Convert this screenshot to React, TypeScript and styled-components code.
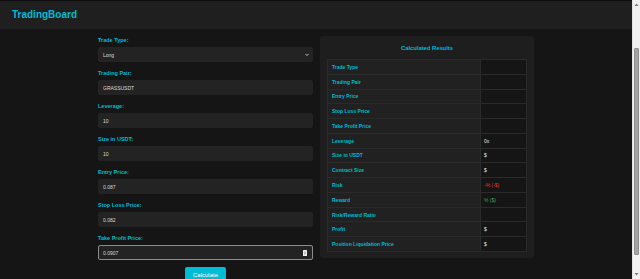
import React from "react";
import styled, { createGlobalStyle } from "styled-components";

const GlobalStyle = createGlobalStyle`
  html, body {
    margin: 0;
    padding: 0;
    height: 279px;
    overflow: hidden;
    background: #151515;
    font-family: "Liberation Sans", Arial, sans-serif;
  }
  * { box-sizing: border-box; }
`;

const Page = styled.div`
  display: flex;
  height: 279px;
`;

const Viewport = styled.div`
  flex: 1;
  min-width: 0;
  height: 279px;
  overflow: hidden;
  background: #151515;
`;

const ScrollStrip = styled.div`
  width: 8px;
  height: 279px;
  background: #f1f1f1;
  border-left: 1px solid #e2e2e2;
  display: flex;
  flex-direction: column;
  align-items: center;
`;

const ArrowBox = styled.svg`
  width: 7px;
  height: 9px;
  flex: none;
`;

const Track = styled.div`
  flex: 1;
  width: 100%;
  display: flex;
  flex-direction: column;
  align-items: center;
  padding-top: 39px;
`;

const Thumb = styled.div`
  width: 5px;
  height: 207px;
  background: #a3a3a3;
  border: 1px solid #8f8f8f;
  border-radius: 1px;
`;

const Header = styled.header`
  height: 29px;
  border-top: 1px solid #0c0c0c;
  background: #1f1f1f;
  display: flex;
  align-items: center;
  padding: 0 0 1px 12px;
`;

const Title = styled.h1`
  margin: 0;
  font-size: 10px;
  font-weight: 700;
  color: #00bcd4;
  line-height: 12px;
`;

const Main = styled.main`
  display: flex;
  justify-content: center;
  align-items: flex-start;
  gap: 7px;
  padding: 7px 0 0;
`;

const FormCol = styled.form`
  width: 215px;
  display: flex;
  flex-direction: column;
`;

const Field = styled.div`
  display: flex;
  flex-direction: column;
  margin-bottom: 7px;
`;

const Label = styled.label`
  display: block;
  font-size: 5.5px;
  line-height: 8px;
  font-weight: 700;
  color: #00bcd4;
  margin-bottom: 3px;
`;

const InputWrap = styled.div`
  position: relative;
`;

const TextInput = styled.input<{ $focused?: boolean }>`
  display: block;
  width: 100%;
  height: 15px;
  margin: 0;
  padding: 0 4px;
  border: 1px solid ${(p) => (p.$focused ? "#8c8c8c" : "#232323")};
  border-radius: 2px;
  background: #232323;
  color: #dcdcdc;
  font-family: "Liberation Sans", Arial, sans-serif;
  font-size: 5px;
  outline: none;
`;

const Select = styled.select`
  display: block;
  width: 100%;
  height: 15px;
  margin: 0;
  padding: 0 4px;
  border: 1px solid #232323;
  border-radius: 2px;
  background: #232323;
  color: #dcdcdc;
  font-family: "Liberation Sans", Arial, sans-serif;
  font-size: 5px;
  appearance: none;
  -webkit-appearance: none;
  outline: none;
`;

const Chevron = styled.svg`
  position: absolute;
  right: 4px;
  top: 5.5px;
  width: 4px;
  height: 4px;
  pointer-events: none;
`;

const Spinner = styled.svg`
  position: absolute;
  right: 6px;
  top: 4.5px;
  width: 4px;
  height: 6px;
  pointer-events: none;
`;

const ButtonRow = styled.div`
  display: flex;
  justify-content: center;
`;

const Button = styled.button`
  height: 16px;
  padding: 0 7.5px;
  border: none;
  border-radius: 2px;
  background: #00bcd4;
  color: #ffffff;
  font-family: "Liberation Sans", Arial, sans-serif;
  font-size: 6px;
  cursor: pointer;
`;

const Panel = styled.section`
  width: 214px;
  background: #1e1e1e;
  border-radius: 3px;
  padding: 8px 7px 6px;
`;

const PanelTitle = styled.h2`
  margin: 0 0 7px;
  text-align: center;
  font-size: 5.8px;
  line-height: 8px;
  font-weight: 700;
  color: #00bcd4;
`;

const Table = styled.div`
  display: grid;
  grid-template-columns: 152px 1fr;
  border: 1px solid #2a2a2a;
  border-bottom: none;
`;

const Cell = styled.div<{ $value?: boolean; $tone?: "red" | "green" }>`
  height: 14.77px;
  display: flex;
  align-items: center;
  padding-left: ${(p) => (p.$value ? "3px" : "4px")};
  border-bottom: 1px solid #2a2a2a;
  border-left: ${(p) => (p.$value ? "1px solid #2a2a2a" : "none")};
  background: ${(p) => (p.$value ? "#151515" : "#212121")};
  font-size: 5px;
  font-weight: ${(p) => (p.$value ? 400 : 700)};
  color: ${(p) =>
    p.$tone === "red"
      ? "#e53935"
      : p.$tone === "green"
      ? "#43a047"
      : p.$value
      ? "#e6e6e6"
      : "#00bcd4"};
  white-space: nowrap;
`;

const fields: { label: string; value: string; focused?: boolean }[] = [
  { label: "Trading Pair:", value: "GRASSUSDT" },
  { label: "Leverage:", value: "10" },
  { label: "Size in USDT:", value: "10" },
  { label: "Entry Price:", value: "0.087" },
  { label: "Stop Loss Price:", value: "0.082" },
  { label: "Take Profit Price:", value: "0.0907", focused: true },
];

const results: { label: string; value: string; tone?: "red" | "green" }[] = [
  { label: "Trade Type", value: "" },
  { label: "Trading Pair", value: "" },
  { label: "Entry Price", value: "" },
  { label: "Stop Loss Price", value: "" },
  { label: "Take Profit Price", value: "" },
  { label: "Leverage", value: "0x" },
  { label: "Size in USDT", value: "$" },
  { label: "Contract Size", value: "$" },
  { label: "Risk", value: "-% (-$)", tone: "red" },
  { label: "Reward", value: "% ($)", tone: "green" },
  { label: "Risk/Reward Ratio", value: "" },
  { label: "Profit", value: "$" },
  { label: "Position Liquidation Price", value: "$" },
];

export default function App() {
  return (
    <>
      <GlobalStyle />
      <Page>
        <Viewport>
          <Header>
            <Title>TradingBoard</Title>
          </Header>
          <Main>
            <FormCol onSubmit={(e) => e.preventDefault()}>
              <Field>
                <Label>Trade Type:</Label>
                <InputWrap>
                  <Select defaultValue="Long">
                    <option>Long</option>
                    <option>Short</option>
                  </Select>
                  <Chevron viewBox="0 0 8 8">
                    <path d="M1.5 2.5 L4 5 L6.5 2.5" fill="none" stroke="#e8e8e8" strokeWidth="1.6" strokeLinecap="round" strokeLinejoin="round" />
                  </Chevron>
                </InputWrap>
              </Field>
              {fields.map((f) => (
                <Field key={f.label}>
                  <Label>{f.label}</Label>
                  <InputWrap>
                    <TextInput $focused={f.focused} defaultValue={f.value} />
                    {f.focused && (
                      <Spinner viewBox="0 0 8 12">
                        <rect x="0" y="0" width="8" height="12" rx="1" fill="#f2f2f2" />
                        <path d="M2 5 L4 2.5 L6 5 Z" fill="#777" />
                        <path d="M2 7 L4 9.5 L6 7 Z" fill="#777" />
                      </Spinner>
                    )}
                  </InputWrap>
                </Field>
              ))}
              <ButtonRow>
                <Button type="submit">Calculate</Button>
              </ButtonRow>
            </FormCol>
            <Panel>
              <PanelTitle>Calculated Results</PanelTitle>
              <Table>
                {results.map((r) => (
                  <React.Fragment key={r.label}>
                    <Cell>{r.label}</Cell>
                    <Cell $value $tone={r.tone}>{r.value}</Cell>
                  </React.Fragment>
                ))}
              </Table>
            </Panel>
          </Main>
        </Viewport>
        <ScrollStrip>
          <ArrowBox viewBox="0 0 7 9">
            <path d="M1.5 6 L3.5 3.5 L5.5 6 Z" fill="#7a7a7a" />
          </ArrowBox>
          <Track>
            <Thumb />
          </Track>
          <ArrowBox viewBox="0 0 7 9">
            <path d="M1.5 3 L3.5 5.5 L5.5 3 Z" fill="#7a7a7a" />
          </ArrowBox>
        </ScrollStrip>
      </Page>
    </>
  );
}
